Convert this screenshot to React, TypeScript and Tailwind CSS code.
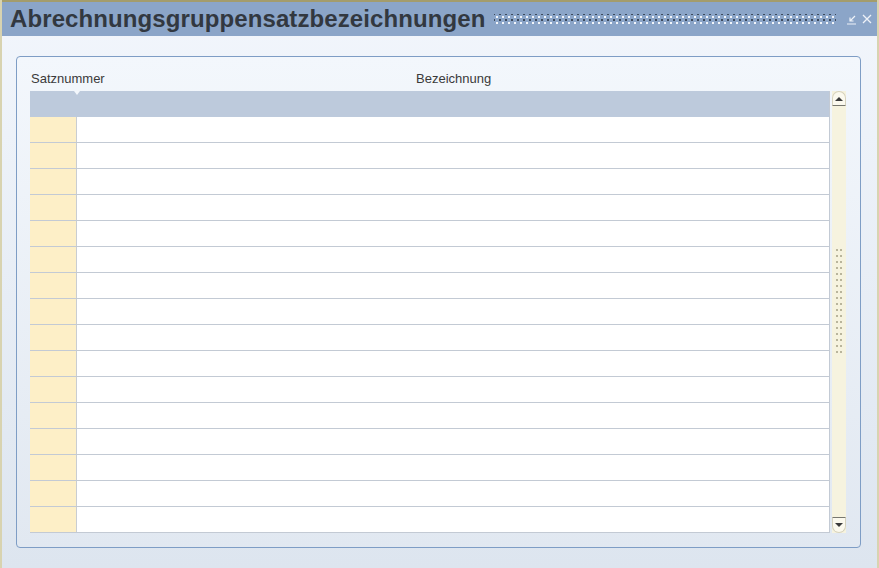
const rows = Array.from({ length: 16 }, (_, i) => i);

function Grip() {
  return (
    <div className="h-[11px] flex-1 bg-[radial-gradient(circle,#f2f5fa_0.8px,transparent_1.2px),radial-gradient(circle,#3d4a5c_0.8px,transparent_1.2px)] bg-[length:6px_6px,6px_6px] bg-[position:0_0,3px_3px]" />
  );
}

export default function App() {
  return (
    <div
      className="w-[879px] h-[568px] overflow-hidden flex flex-col bg-[linear-gradient(#f2f6fc,#dde5ef)] border-x-2 border-[#d8d3b0]"
      style={{ fontFamily: '"Liberation Sans", Arial, sans-serif' }}
    >
      {/* title bar */}
      <div className="h-[36px] shrink-0 border-t-2 border-[#a39c6c] bg-[#8ba5c8] flex items-center pl-[8px] pr-[5px] gap-[8px]">
        <span className="text-[24px] font-bold text-[#323840] leading-none tracking-[0.1px]">
          Abrechnungsgruppensatzbezeichnungen
        </span>
        <Grip />
        <div className="flex items-center gap-[5px] pl-[2px]">
          <svg width="11" height="11" viewBox="0 0 11 11">
            <path d="M9 2 L4 7 M4 3.5 L4 7 L7.5 7 M1 10 L10 10" stroke="#eef2f8" strokeWidth="1.2" fill="none" />
          </svg>
          <svg width="10" height="10" viewBox="0 0 10 10">
            <path d="M1 1 L9 9 M9 1 L1 9" stroke="#eef2f8" strokeWidth="1.3" fill="none" />
          </svg>
        </div>
      </div>

      {/* content */}
      <div className="flex-1 pt-[20px] pl-[14px] pr-[16px] pb-[20px]">
        <div className="h-full rounded-[4px] border border-[#7e9dc5] bg-[linear-gradient(#f3f7fc,#e1e8f1)] pl-[13px] pr-[13px] pt-[12px]">
          <div className="flex h-[20px] items-center text-[13px] text-[#3a3a3a]">
            <span className="w-[386px] pl-[1px]">Satznummer</span>
            <span>Bezeichnung</span>
          </div>
          <div className="flex gap-[2px] mt-[2px]">
            <div className="w-[800px] border-r border-[#c3cad4]">
              <div className="relative h-[26px] bg-[#bdcadc]">
                <div className="absolute left-[44px] top-0 w-0 h-0 border-l-[3px] border-r-[3px] border-t-[4px] border-l-transparent border-r-transparent border-t-[#f3f7fc]" />
              </div>
              {rows.map((r) => (
                <div key={r} className="flex h-[26px] border-b border-[#c3cad4] bg-white">
                  <div className="w-[47px] bg-[#fdefc7] border-r border-[#c9cdd2]" />
                  <div className="flex-1" />
                </div>
              ))}
            </div>
            <div className="w-[14px] h-[442px] bg-[#f6f3df] flex flex-col items-center">
              <div className="w-[14px] h-[15px] rounded-t-[7px] bg-[#fbf9ee] border border-b-[#77776f] border-x-[#d6d2bc] border-t-[#d6d2bc] flex items-center justify-center">
                <div className="w-0 h-0 border-l-[4px] border-r-[4px] border-b-[4px] border-l-transparent border-r-transparent border-b-[#3a3a3a]" />
              </div>
              <div className="mt-[141px] w-[8px] h-[108px] bg-[radial-gradient(circle,#b9b59c_0.9px,transparent_1.3px)] bg-[length:4px_6px]" />
              <div className="flex-1" />
              <div className="w-[14px] h-[16px] rounded-b-[7px] bg-[#fbf9ee] border border-t-[#77776f] border-x-[#d6d2bc] border-b-[#d6d2bc] flex items-center justify-center">
                <div className="w-0 h-0 border-l-[4px] border-r-[4px] border-t-[4px] border-l-transparent border-r-transparent border-t-[#3a3a3a]" />
              </div>
            </div>
          </div>
        </div>
      </div>
    </div>
  );
}
